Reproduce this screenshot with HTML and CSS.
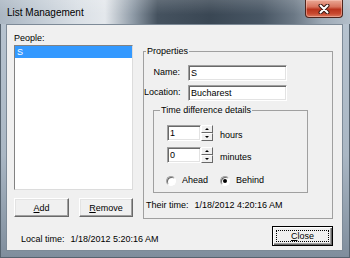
FILE: index.html
```html
<!DOCTYPE html>
<html>
<head>
<meta charset="utf-8">
<title>List Management</title>
<link rel="stylesheet" href="styles.css">
</head>
<body>
<div class="window">
  <div class="titlebar">
    <span class="title">List Management</span>
    <div class="close-x">
      <svg width="12" height="10" viewBox="0 0 12 10"><path d="M2.5 1.5 L9.5 8.5 M9.5 1.5 L2.5 8.5" stroke="#3b1a14" stroke-width="4" stroke-linecap="round"/><path d="M2.5 1.5 L9.5 8.5 M9.5 1.5 L2.5 8.5" stroke="#fff" stroke-width="2" stroke-linecap="round"/></svg>
    </div>
  </div>
  <div class="frame">
    <div class="client">
      <div class="main">
        <div class="people">
          <div class="lbl">People:</div>
          <div class="listbox"><div class="item sel">S</div></div>
          <div class="btnrow">
            <button class="btn add"><u>A</u>dd</button>
            <button class="btn remove"><u>R</u>emove</button>
          </div>
        </div>
        <fieldset class="group props">
          <legend>Properties</legend>
          <div class="fields">
            <label class="flabel">Name:</label><div class="edit">S</div>
            <label class="flabel">Location:</label><div class="edit">Bucharest</div>
          </div>
          <fieldset class="group timediff">
            <legend>Time difference details</legend>
            <div class="spinrow">
              <div class="edit num">1</div>
              <div class="spin"><span class="up"></span><span class="down"></span></div>
              <span class="unit">hours</span>
            </div>
            <div class="spinrow second">
              <div class="edit num">0</div>
              <div class="spin"><span class="up"></span><span class="down"></span></div>
              <span class="unit">minutes</span>
            </div>
            <div class="radios">
              <div class="ropt first"><span class="radio"></span><span class="rtext">Ahead</span></div>
              <div class="ropt"><span class="radio"><span class="dot"></span></span><span class="rtext">Behind</span></div>
            </div>
          </fieldset>
          <div class="time their"><span class="tlabel">Their time:</span><span>1/18/2012 4:20:16 AM</span></div>
        </fieldset>
      </div>
      <div class="footer">
        <div class="time local"><span class="tlabel">Local time:</span><span>1/18/2012 5:20:16 AM</span></div>
        <button class="btn close"><span class="focus"><u>C</u>lose</span></button>
      </div>
    </div>
  </div>
</div>
</body>
</html>
```

FILE: styles.css
```css
* { box-sizing: border-box; }
html, body { margin: 0; padding: 0; }
body {
  width: 350px;
  height: 258px;
  overflow: hidden;
  font-family: "Liberation Sans", Arial, sans-serif;
  font-size: 9px;
  color: #000;
  background: #8d9aa7;
}
.window {
  width: 350px;
  height: 258px;
  display: flex;
  flex-direction: column;
  background: linear-gradient(180deg, #b9c5d1 0%, #aab7c4 60%, #7f8d9c 100%);
  box-shadow: inset 1px 0 #56636f, inset -1px 0 #56636f, inset 0 -1px #56636f;
}
.titlebar {
  height: 24px;
  flex: none;
  display: flex;
  align-items: flex-start;
  padding: 0 7px;
  background:
    linear-gradient(180deg, rgba(255,255,255,0.15), rgba(255,255,255,0) 60%),
    linear-gradient(90deg, #aab6c2 0%, #c4cdd6 12%, #d9dfe5 22%, #e4e8ec 30%, #8f9ba7 38%, #45525f 45%, #3a4754 60%, #485664 75%, #6b7885 84%, #9da9b5 92%, #b3bec9 100%);
}
.title {
  margin-top: 6px;
  font-size: 10px;
  line-height: 13px;
}
.close-x {
  margin-left: auto;
  width: 38px;
  height: 18px;
  border: 1px solid #4e241c;
  border-top: none;
  border-radius: 0 0 4px 4px;
  background: linear-gradient(180deg, #eaa996 0%, #d8735d 40%, #b9341d 55%, #c8492f 80%, #da7a60 100%);
  box-shadow: inset 0 0 0 1px rgba(255, 210, 200, 0.45);
  display: flex;
  align-items: center;
  justify-content: center;
}
.frame {
  flex: 1;
  display: flex;
  padding: 0 7px 7px 6px;
}
.client {
  flex: 1;
  display: flex;
  flex-direction: column;
  background: #f0f0f0;
  border: 1px solid #7d8a97;
}
.main {
  display: grid;
  grid-template-columns: 119px 190px;
  column-gap: 10px;
  align-items: start;
  padding: 7px 0 0 7px;
}
.lbl { line-height: 13px; }
.listbox {
  height: 145px;
  background: #fff;
  border: 1px solid;
  border-color: #828282 #dcdcdc #dcdcdc #828282;
}
.item {
  height: 12px;
  line-height: 12px;
  padding-left: 2px;
}
.item.sel { background: #3399ff; color: #fff; }
.btnrow {
  display: flex;
  justify-content: space-between;
  margin-top: 8px;
}
.btn {
  font: inherit;
  color: #000;
  height: 19px;
  padding: 0;
  background: #f0f0f0;
  border: 1px solid;
  border-color: #fff #696969 #696969 #fff;
  box-shadow: inset -1px -1px 0 #a0a0a0, inset 1px 1px 0 #e3e3e3;
}
.add { width: 55px; }
.remove { width: 54px; }

.group {
  margin: 0;
  padding: 0;
  min-width: 0;
  border: 1px solid #a0a0a0;
}
.group legend {
  padding: 0 1px;
  margin-left: 2px;
  line-height: 13px;
}
.props {
  margin-top: 13px;
  padding-bottom: 6px;
}
.fields {
  display: grid;
  grid-template-columns: 36px 99px;
  column-gap: 8px;
  row-gap: 4px;
  margin-top: 7px;
}
.flabel {
  text-align: right;
  line-height: 14px;
  white-space: nowrap;
}
.edit {
  height: 16px;
  background: #fff;
  border: 1px solid;
  border-color: #a0a0a0 #fff #fff #a0a0a0;
  box-shadow: inset 1px 1px 0 #696969, inset -1px -1px 0 #e3e3e3;
  padding-left: 2px;
  line-height: 14px;
}
.timediff {
  margin: 3px 0 0 9px;
  width: 155px;
  padding-bottom: 5px;
}
.timediff legend { margin-left: 6px; }
.spinrow {
  display: flex;
  align-items: flex-start;
  padding-left: 13px;
  margin-top: 8px;
}
.spinrow.second { margin-top: 5px; }
.num { width: 34px; }
.spin {
  width: 12px;
  height: 16px;
  display: flex;
  flex-direction: column;
}
.spin span {
  flex: 1;
  background: #f0f0f0;
  border: 1px solid;
  border-color: #fff #696969 #696969 #fff;
  display: flex;
  align-items: center;
  justify-content: center;
}
.spin span::before {
  content: "";
  border-left: 2px solid transparent;
  border-right: 2px solid transparent;
}
.spin .up::before { border-bottom: 2px solid #000; }
.spin .down::before { border-top: 2px solid #000; }
.unit {
  margin: 4px 0 0 7px;
  line-height: 13px;
}
.radios {
  display: flex;
  align-items: center;
  padding-left: 12px;
  margin-top: 10px;
  height: 13px;
}
.ropt {
  display: flex;
  align-items: center;
}
.ropt.first { width: 54px; }
.radio {
  width: 10px;
  height: 10px;
  border-radius: 50%;
  background: #fff;
  border: 1px solid;
  border-color: #a0a0a0 #fff #fff #a0a0a0;
  box-shadow: inset 1px 1px 0 #696969;
  display: flex;
  align-items: center;
  justify-content: center;
}
.dot {
  width: 4px;
  height: 4px;
  border-radius: 50%;
  background: #000;
}
.rtext {
  margin-left: 6px;
  line-height: 13px;
}
.time {
  line-height: 13px;
  white-space: nowrap;
}
.tlabel { margin-right: 6px; }
.their {
  margin-top: 6px;
  padding-left: 2px;
}
.footer {
  display: flex;
  align-items: flex-start;
  padding: 7px 0 0 14px;
}
.local { margin-top: 7px; }
.btn.close {
  width: 61px;
  height: 20px;
  margin-left: auto;
  margin-right: 9px;
  border: 1px solid #000;
  box-shadow: inset 1px 1px 0 #fff, inset -1px -1px 0 #696969, inset -2px -2px 0 #a0a0a0;
  padding: 3px;
  display: flex;
}
.focus {
  flex: 1;
  border: 1px dotted #000;
  display: flex;
  align-items: center;
  justify-content: center;
  line-height: 10px;
}
```
